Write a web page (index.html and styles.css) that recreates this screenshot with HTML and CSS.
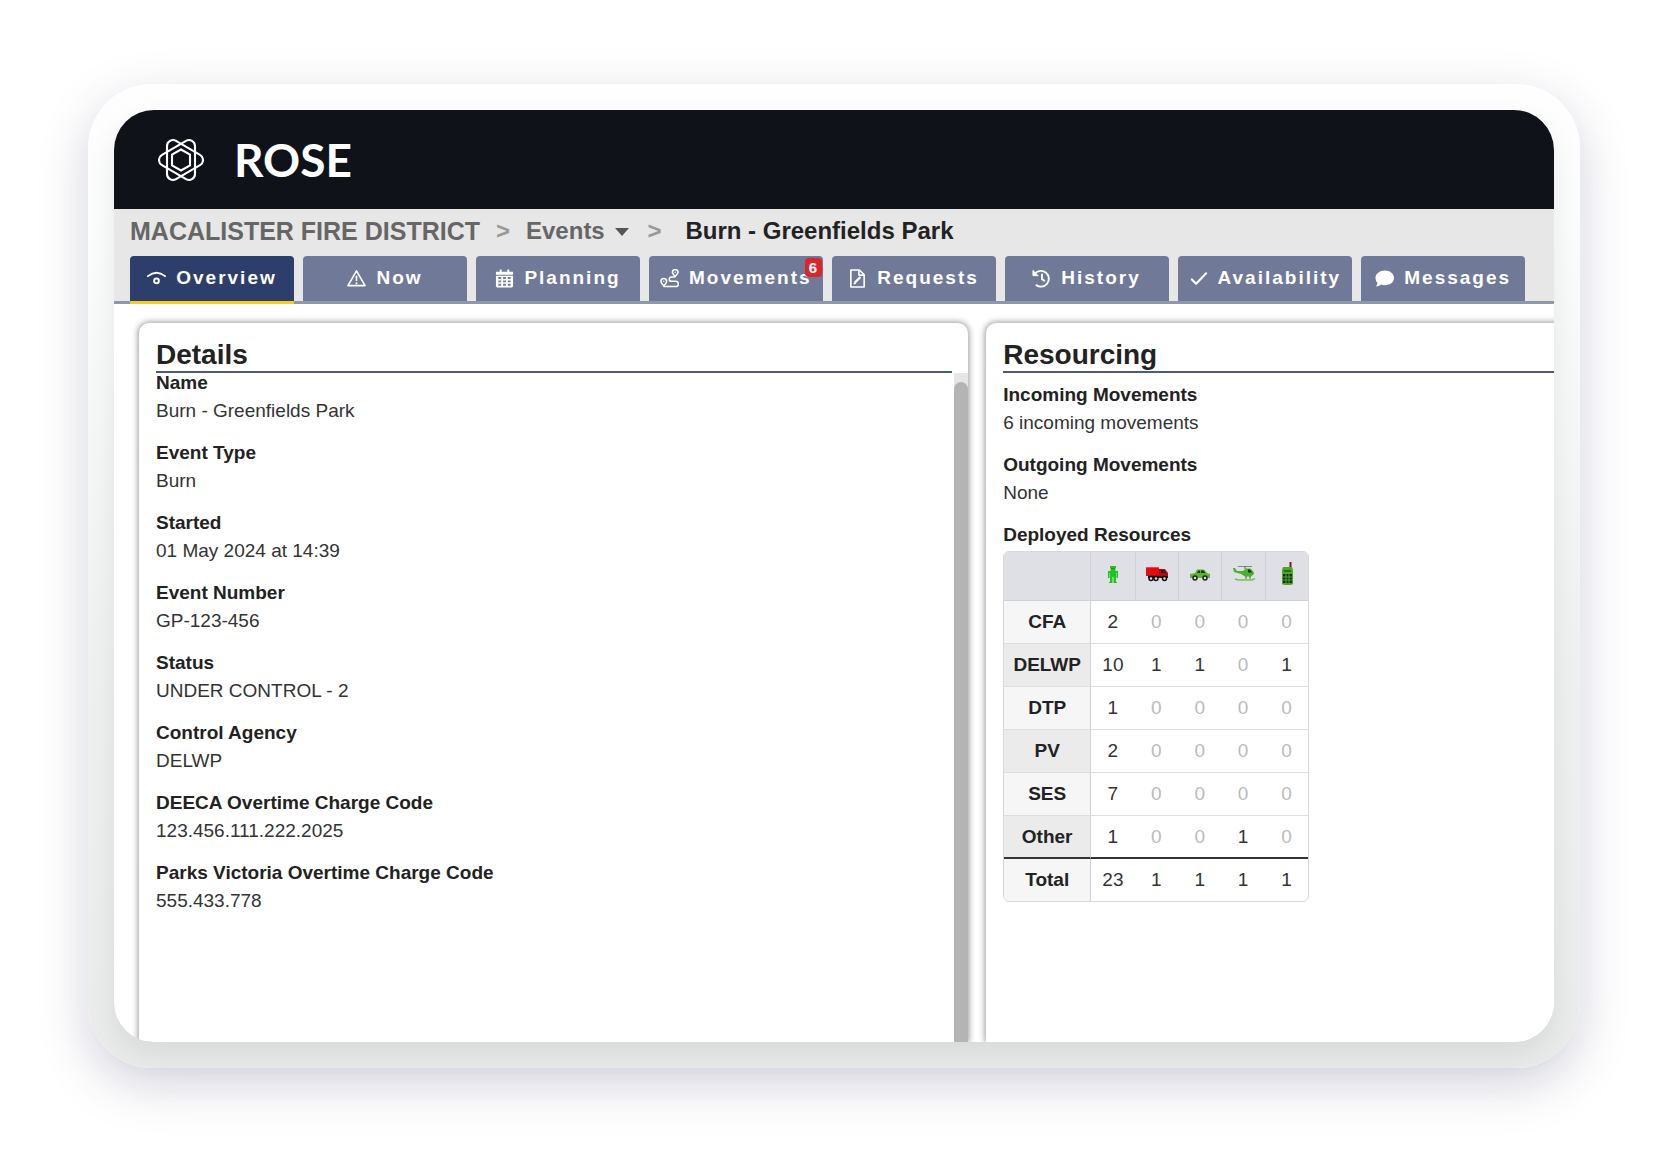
FILE: index.html
```html
<!DOCTYPE html>
<html lang="en">
<head>
    <meta charset="UTF-8">
    <meta name="viewport" content="width=device-width, initial-scale=1.0">
    <title>ROSE - Burn - Greenfields Park</title>
    <link rel="stylesheet" href="styles.css">
</head>
<body>

    <div class="frame">
        <div class="screen">

            <header class="topbar">
                <svg class="logo" viewBox="0 0 46 46" fill="none" stroke="#fff" stroke-width="2.1">
                    <path d="M42 17.800A6 6 0 0 1 42 28.200L18 42.100A6 6 0 0 1 9 36.900V9.100A6 6 0 0 1 18 3.900Z" />
                    <path d="M4 17.800A6 6 0 0 0 4 28.200L28 42.100A6 6 0 0 0 37 36.900V9.100A6 6 0 0 0 28 3.900Z" />
                    <path d="M23 12.500L32 17.700V28.300L23 33.500L14 28.300V17.700Z" />
                </svg>
                <span class="brand">ROSE</span>
            </header>

            <div class="subhead">
                <nav class="breadcrumb">
                    <a class="district" href="#">MACALISTER FIRE DISTRICT</a>
                    <span class="sep">&gt;</span>
                    <a href="#">Events <span class="caret"></span></a>
                    <span class="sep">&gt;</span>
                    <span class="current">Burn - Greenfields Park</span>
                </nav>

                <nav class="tabs">
                    <a class="tab active" href="#">
                        <svg viewBox="0 0 20 20" fill="none" stroke="currentColor" stroke-width="2"><path d="M1 7.500Q10 0.500 19 7.500" stroke-linecap="round" /><circle cx="10" cy="12.500" r="2.500" /></svg>
                        Overview
                    </a>
                    <a class="tab" href="#">
                        <svg viewBox="0 0 20 20" fill="none" stroke="currentColor" stroke-width="1.700" stroke-linejoin="round"><path d="M10 2L19 17.500H1Z" /><path d="M10 7V12.500M10 14V16" /></svg>
                        Now
                    </a>
                    <a class="tab" href="#">
                        <svg viewBox="0 0 20 20" fill="currentColor" fill-rule="evenodd"><path d="M1 3H5V0.500H7V3H13V0.500H15V3H19V6H1ZM1 7H19V18Q19 19.500 17.500 19.500H2.500Q1 19.500 1 18ZM3.500 8.500V10.500H6.500V8.500ZM8.500 8.500V10.500H11.500V8.500ZM13.500 8.500V10.500H16.500V8.500ZM3.500 12V14H6.500V12ZM8.500 12V14H11.500V12ZM13.500 12V14H16.500V12ZM3.500 15.500V17.500H6.500V15.500ZM8.500 15.500V17.500H11.500V15.500ZM13.500 15.500V17.500H16.500V15.500Z" /></svg>
                        Planning
                    </a>
                    <a class="tab" href="#">
                        <svg viewBox="0 0 20 20" fill="none" stroke="currentColor" stroke-width="1.600"><path d="M4 18Q1 14.500 1 13A3 3 0 0 1 7 13Q7 14.500 4 18ZM16 8Q13 4.500 13 3.500A3 3 0 0 1 19 3.500Q19 4.500 16 8Z" /><path d="M4 18.500H16.500A2.700 2.700 0 0 0 16.500 13H12A2.200 2.200 0 0 1 12 8.500H16" /><path d="M3.500 13H4.500M15.500 3.500H16.500" /></svg>
                        Movements
                        <span class="badge">6</span>
                    </a>
                    <a class="tab" href="#">
                        <svg viewBox="0 0 20 20" fill="none" stroke="currentColor" stroke-width="1.700" stroke-linejoin="round"><path d="M3 1H12L17 6V19H3Z" /><path d="M11.500 1V6.500H17" /><path d="M7 14.500L13 8.500" stroke-width="2.500" /><path d="M6 15.500L8 15" /></svg>
                        Requests
                    </a>
                    <a class="tab" href="#">
                        <svg viewBox="0 0 20 20" fill="none" stroke="currentColor" stroke-width="2"><path d="M3 5A8.300 8.300 0 1 1 4 16.500" /><path d="M1 1.500V7H6.500Z" fill="currentColor" stroke-width="1" /><path d="M10.500 5V10.500L13.500 13" /></svg>
                        History
                    </a>
                    <a class="tab" href="#">
                        <svg viewBox="0 0 20 20" fill="none" stroke="currentColor" stroke-width="2.200" stroke-linecap="round" stroke-linejoin="round"><path d="M3 11L7.500 15.500L18 4.500" /></svg>
                        Availability
                    </a>
                    <a class="tab" href="#">
                        <svg viewBox="0 0 20 20" fill="currentColor"><path d="M10.500 1.500C16 1.500 20 5 20 9.500S16 17 10.500 17Q8 17 6.500 16.300Q4 18.500 1 18.500Q2.500 16.500 2.500 14.500Q0.500 12.500 0.500 9.500C0.500 5 5 1.500 10.500 1.500Z" /></svg>
                        Messages
                    </a>
                </nav>
            </div>

            <main class="panels">
                <section class="panel">
                    <h2>Details</h2>
                    <div class="panel-body">
                        <dl class="fields">
                            <div><dt>Name</dt><dd>Burn - Greenfields Park</dd></div>
                            <div><dt>Event Type</dt><dd>Burn</dd></div>
                            <div><dt>Started</dt><dd>01 May 2024 at 14:39</dd></div>
                            <div><dt>Event Number</dt><dd>GP-123-456</dd></div>
                            <div><dt>Status</dt><dd>UNDER CONTROL - 2</dd></div>
                            <div><dt>Control Agency</dt><dd>DELWP</dd></div>
                            <div><dt>DEECA Overtime Charge Code</dt><dd>123.456.111.222.2025</dd></div>
                            <div><dt>Parks Victoria Overtime Charge Code</dt><dd>555.433.778</dd></div>
                        </dl>
                        <div class="scrollbar"><div class="thumb"></div></div>
                    </div>
                </section>

                <section class="panel">
                    <h2>Resourcing</h2>
                    <div class="resourcing">
                        <dl class="fields">
                            <div><dt>Incoming Movements</dt><dd>6 incoming movements</dd></div>
                            <div><dt>Outgoing Movements</dt><dd>None</dd></div>
                        </dl>
                        <h3 id="deployed">Deployed Resources</h3>
                        <table class="resources" aria-labelledby="deployed">
                            <thead>
                                <tr>
                                    <th></th>
                                    <th scope="col" aria-label="People">
                                        <svg viewBox="0 0 24 24" fill="#1fc41f"><path d="M9 4H15V6H14.500V9H17V16H15.500V11H15V20H16V21H12.500V15H11.500V21H8V20H9V11H8.500V16H7V9H9.500V6H9Z" /><path d="M10.500 6H11.500V7H10.500ZM12.500 6H13.500V7H12.500Z" fill="#0a6a0a" /></svg>
                                    </th>
                                    <th scope="col" aria-label="Trucks">
                                        <svg viewBox="0 0 24 24"><path d="M1 5H14V14H1Z" fill="#e00d12" /><path d="M14 7H20L23 11V15H3V13H14Z" fill="#b50a10" /><path d="M1 5H14V6H1Z" fill="#f4464a" /><path d="M16 8H19L21 11H16Z" fill="#222" /><path d="M3 14H23V16H3Z" fill="#401010" /><g fill="#ddd" stroke="#111" stroke-width="1.500"><circle cx="6" cy="16.500" r="2" /><circle cx="11" cy="16.500" r="2" /><circle cx="19.500" cy="16.500" r="2" /></g></svg>
                                    </th>
                                    <th scope="col" aria-label="Cars">
                                        <svg viewBox="0 0 24 24"><path d="M2 12L7 11L9 7.500H16L19 11L22 12V16H2Z" fill="#5cb531" /><path d="M9 11L10.500 8.500H12V11ZM13 8.500H15.500L17.500 11H13Z" fill="#173a0c" /><g fill="#ddd" stroke="#222" stroke-width="1.500"><circle cx="7" cy="16" r="2" /><circle cx="17" cy="16" r="2" /></g></svg>
                                    </th>
                                    <th scope="col" aria-label="Aircraft">
                                        <svg viewBox="0 0 24 24"><path d="M6 4.500H20" stroke="#888" /><path d="M1 6H3L5 9H11L14 6.500H18Q22 9 22 12L19 14.500H13L9 12L2 10Z" fill="#4fae2c" /><path d="M16 7.500H18L20 10.500H16Z" fill="#183818" /><path d="M13 4V7M14 14V17M18 14V17" stroke="#397c22" /><path d="M3 17Q5 18 8 18H20L23 16.500" fill="none" stroke="#6cc64a" stroke-width="1.500" /></svg>
                                    </th>
                                    <th scope="col" aria-label="Radios">
                                        <svg viewBox="0 0 24 24"><path d="M14.500 0H16.500V6H14.500Z" fill="#7a1d1d" /><path d="M8 5H17L18 8V22Q17 23 12.500 23T7 22V8Z" fill="#4ba526" /><path d="M9 8H16V10H9Z" fill="#2b6e16" /><path d="M8 12H17V21H8Z" fill="#103808" /><path d="M8 15H17M8 18H17M11 12V21M14 12V21" stroke="#68b34a" stroke-width=".8" /></svg>
                                    </th>
                                </tr>
                            </thead>
                            <tbody>
                                <tr><th scope="row">CFA</th><td>2</td><td class="zero">0</td><td class="zero">0</td><td class="zero">0</td><td class="zero">0</td></tr>
                                <tr><th scope="row">DELWP</th><td>10</td><td>1</td><td>1</td><td class="zero">0</td><td>1</td></tr>
                                <tr><th scope="row">DTP</th><td>1</td><td class="zero">0</td><td class="zero">0</td><td class="zero">0</td><td class="zero">0</td></tr>
                                <tr><th scope="row">PV</th><td>2</td><td class="zero">0</td><td class="zero">0</td><td class="zero">0</td><td class="zero">0</td></tr>
                                <tr><th scope="row">SES</th><td>7</td><td class="zero">0</td><td class="zero">0</td><td class="zero">0</td><td class="zero">0</td></tr>
                                <tr><th scope="row">Other</th><td>1</td><td class="zero">0</td><td class="zero">0</td><td>1</td><td class="zero">0</td></tr>
                            </tbody>
                            <tfoot>
                                <tr><th scope="row">Total</th><td>23</td><td>1</td><td>1</td><td>1</td><td>1</td></tr>
                            </tfoot>
                        </table>
                    </div>
                </section>
            </main>

        </div>
    </div>

</body>
</html>
```
FILE: styles.css
```css
* {
    box-sizing: border-box;
}
body {
    margin: 0;
    padding: 84px 87px 88px 88px;
    height: 100vh;
    font-family: "Liberation Sans", Arial, sans-serif;
    font-size: 19px;
    line-height: 28px;
    color: #333;
    background: #fff;
}
a {
    color: inherit;
    text-decoration: none;
}

/* device frame */
.frame {
    height: 100%;
    padding: 26px;
    border-radius: 64px;
    background: linear-gradient(#fefefe, #fbfcfc 15%, #eff0f0 60%, #eaecec);
    box-shadow: 0 16px 50px rgba(50, 50, 100, 0.22);
}
.screen {
    display: flex;
    flex-direction: column;
    height: 100%;
    overflow: hidden;
    border-radius: 40px;
    background: #fff;
    box-shadow: 0 14px 30px rgba(0, 0, 0, 0.08);
}

/* header */
.topbar {
    display: flex;
    align-items: center;
    flex-shrink: 0;
    gap: 30px;
    height: 99px;
    padding: 0 44px;
    background: #0f1219;
}
.logo {
    width: 46px;
    height: 46px;
}
.brand {
    font-family: Lato, sans-serif;
    font-size: 46px;
    font-weight: 700;
    line-height: 56px;
    color: #fff;
}
.subhead {
    flex-shrink: 0;
    background: #e7e7e7;
    border-bottom: 3px solid #8e97ab;
}
.breadcrumb {
    display: flex;
    gap: 16px;
    padding: 8px 16px 11px;
    font-size: 24px;
    font-weight: 700;
    color: #666;
}
.district {
    font-size: 25px;
}
.sep {
    color: #999;
}
.current {
    margin-left: 8px;
    color: #222;
}
.caret {
    display: inline-block;
    margin: 0 2px 3px 4px;
    border: 7px solid transparent;
    border-top: 8px solid #555;
    border-bottom: 0;
}

/* tabs */
.tabs {
    display: flex;
    gap: 9px;
    margin-bottom: -3px;
    padding: 0 16px;
}
.tab {
    position: relative;
    display: flex;
    align-items: center;
    justify-content: center;
    gap: 10px;
    min-width: 164px;
    height: 48px;
    padding: 0 11px 1px;
    border-bottom: 3px solid #8e97ab;
    border-radius: 4px 4px 0 0;
    font-weight: 700;
    letter-spacing: 2px;
    color: #fff;
    background: #707a98;
}
.tab svg {
    flex-shrink: 0;
    width: 19px;
    height: 19px;
}
.tab.active {
    background: #2c3e69;
    border-bottom-color: #f9cf1c;
}
.badge {
    position: absolute;
    top: 2px;
    right: 1px;
    width: 17px;
    border-radius: 4px;
    font-size: 15px;
    line-height: 19px;
    letter-spacing: 0;
    text-align: center;
    background: #d9262b;
}

/* panels */
.panels {
    display: flex;
    flex: 1;
    gap: 18px;
    min-height: 0;
    padding: 19px 0 0 25px;
}
.panel {
    display: flex;
    flex-direction: column;
    flex: 0 0 58.6%;
    padding-left: 17px;
    border-radius: 10px 10px 0 0;
    background: #fff;
    box-shadow: 0 0 6px 1px rgba(0, 0, 0, 0.4);
}
.panel h2 {
    margin: 0 16px 0 0;
    padding-top: 15px;
    border-bottom: 2px solid #4a5a80;
    font-size: 28px;
    line-height: 33px;
    color: #222;
}
.panel-body {
    display: flex;
    flex: 1;
    justify-content: space-between;
}
.fields {
    display: flex;
    flex-direction: column;
    gap: 14px;
    margin: 0;
}
.panel-body .fields {
    margin-top: -4px;
}
dt, h3 {
    margin: 0;
    font-size: 19px;
    font-weight: 700;
    color: #222;
}
dd {
    margin: 0;
}
.scrollbar {
    width: 14px;
    padding-top: 9px;
    background: #e6e6e6;
}
.thumb {
    height: 100%;
    border-radius: 7px 7px 0 0;
    background: #b4b4b4;
}
.resourcing {
    padding-top: 8px;
}
.resourcing h3 {
    margin-top: 14px;
}

/* deployed resources table */
.resources {
    margin-top: 2px;
    table-layout: fixed;
    width: 306px;
    border: 1px solid #d8d8dc;
    border-radius: 6px;
    border-spacing: 0;
    overflow: hidden;
    text-align: center;
}
.resources th, .resources td {
    height: 43px;
    padding: 0;
    border-bottom: 1px solid #dedede;
}
.resources th:first-child {
    width: 87px;
    border-right: 1px solid #d3d3d6;
    color: #222;
    background: #f6f6f6;
}
.resources thead th,
.resources thead th:first-child {
    height: 49px;
    border-bottom-color: #cfd0d5;
    background: #dfe0e6;
}
.resources thead th + th + th {
    border-left: 1px solid #cfd0d5;
}
.resources tbody tr:nth-child(even) th {
    background: #ebebeb;
}
.resources tbody tr:last-child th,
.resources tbody tr:last-child td {
    border-bottom: 2px solid #333;
}
.resources tfoot th,
.resources tfoot td {
    height: 42px;
    border-bottom: 0;
}
.resources svg {
    display: block;
    width: 24px;
    height: 24px;
    margin: 0 auto 4px;
}
.resources .zero {
    color: #bbb;
}
```
